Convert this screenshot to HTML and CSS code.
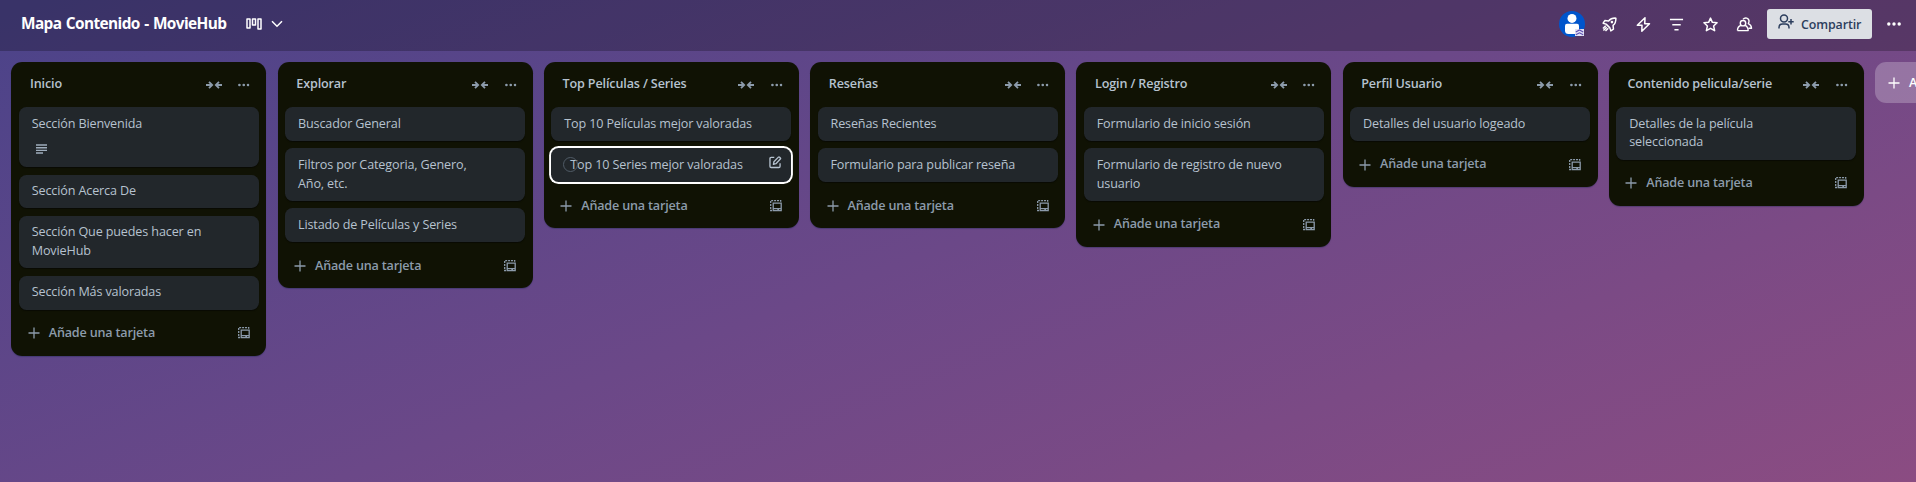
FILE: index.html
```html
<!DOCTYPE html>
<html lang="es">
<head>
<meta charset="utf-8">
<title>Mapa Contenido - MovieHub</title>
<link rel="stylesheet" href="styles.css">
</head>
<body>
<svg class="sprite" aria-hidden="true">
  <symbol id="i-collapse" viewBox="0 0 16 10"><path d="M0 5h5.600M3 1.800 6.200 5 3 8.200M16 5h-5.600M13 1.800 9.800 5 13 8.200" fill="none" stroke="currentColor" stroke-width="1.800"/></symbol>
  <symbol id="i-more" viewBox="0 0 12 4"><circle cx="1.500" cy="2" r="1.400"/><circle cx="6" cy="2" r="1.400"/><circle cx="10.500" cy="2" r="1.400"/></symbol>
  <symbol id="i-plus" viewBox="0 0 12 12"><path d="M6 .5v11M.5 6h11" stroke="currentColor" stroke-width="1.300" fill="none"/></symbol>
  <symbol id="i-template" viewBox="0 0 12 12"><path d="M3.200 3.200h8v7.500h-8zM3.400 8.600h7.800" fill="none" stroke="currentColor" stroke-width="1.300"/><path d="M7.300 8.800h1.700v1.500H7.300z"/><path d="M2 10.500H.7V.7h10v1" fill="none" stroke="currentColor" stroke-width="1.300" stroke-dasharray="2 .9"/></symbol>
</svg>

<header class="bar">
  <h1 class="board-name">Mapa Contenido - MovieHub</h1>
  <svg class="view-icon" viewBox="0 0 16 12"><path d="M1 1h3v9H1zM6.500 1h3v6h-3zM12 1h3v10h-3z" fill="none" stroke="currentColor" stroke-width="1.500" stroke-linejoin="round"/></svg>
  <svg class="chevron" viewBox="0 0 12 8"><path d="m1 1.200 5 5 5-5" fill="none" stroke="currentColor" stroke-width="1.500"/></svg>
  <div class="tools">
    <div class="avatar">
      <svg viewBox="0 0 26 26"><circle cx="13" cy="13" r="13" fill="#0055cc"/><circle cx="13" cy="7.400" r="4.500" fill="#fff"/><path d="M6 14.800q0-2 2-2h10q2 0 2 2v4.700q0 3.500-3.500 3.500h-7Q6 23 6 19.500z" fill="#fff"/></svg>
      <svg class="rank" viewBox="0 0 9 7"><path d="M0 0h9v7H0z" fill="#dfe1f5"/><path d="m.8 3 3.700-2 3.700 2M.8 5.800l3.700-2 3.700 2" fill="none" stroke="#5e4db2" stroke-width="1.100"/></svg>
    </div>
    <svg class="tool" viewBox="0 0 16 16"><path d="M14.800 1.200c-3.800-.2-6 .8-7.800 3L3 3.800 1.200 6.600l3.200 1 4 4 1 3.200 2.800-1.800-.4-4c2.200-1.800 3.200-4 3-7.800zM4 9.300 1 12.300M6.700 12 3.700 15M5 11l-3.500 3.500" fill="none" stroke="currentColor" stroke-width="1.600" stroke-linejoin="round"/><circle cx="10.600" cy="5.400" r="1.400"/></svg>
    <svg class="tool" viewBox="0 0 16 16"><path d="M9.600.8 1.400 8.800h5L6.200 15.200l8.200-8H9.300z" fill="none" stroke="currentColor" stroke-width="1.600" stroke-linejoin="round"/></svg>
    <svg class="tool" viewBox="0 0 16 16"><path d="M1 2.700h14M3.500 8.200h9M5.800 13.600h4.400" fill="none" stroke="currentColor" stroke-width="1.500"/></svg>
    <svg class="tool" viewBox="0 0 16 16"><path d="m8 1.200 2 4.500 5 .5-3.700 3.400 1.100 5L8 12.100l-4.400 2.500 1.100-5L1 6.200l5-.5z" fill="none" stroke="currentColor" stroke-width="1.600" stroke-linejoin="round"/></svg>
    <svg class="tool" viewBox="0 0 16 16"><circle cx="6.400" cy="6.600" r="2.900" fill="none" stroke="currentColor" stroke-width="1.500"/><path d="M.5 14.500q0-4.400 3.700-5.600M.5 14.500h11.400q0-4.400-3.300-5.600M6.500 2.400Q8 .6 10.400 1.200q3.800 1.600 1.700 5.800 3.200 1.400 3.400 5h-3" fill="none" stroke="currentColor" stroke-width="1.500" stroke-linejoin="round"/></svg>
    <button class="share"><svg viewBox="0 0 16 16"><circle cx="6" cy="4.600" r="3.500"/><path d="M1 14.500v-1q0-3.500 3.500-3.500h3q3.500 0 3.500 3.500v1M13 5v5.400M10.300 7.700h5.400"/></svg><span>Compartir</span></button>
    <svg class="bar-more" viewBox="0 0 14 4"><circle cx="1.800" cy="2" r="1.700"/><circle cx="7" cy="2" r="1.700"/><circle cx="12.200" cy="2" r="1.700"/></svg>
  </div>
</header>

<main class="board">
  <section class="list">
    <header class="list-head"><h2>Inicio</h2><svg class="collapse"><use href="#i-collapse"/></svg><svg class="more"><use href="#i-more"/></svg></header>
    <div class="cards">
      <article class="card">Sección Bienvenida<svg class="desc" viewBox="0 0 11 10"><path d="M0 1h11M0 3.700h11M0 6.400h11M0 9h7" stroke="currentColor" stroke-width="1.400"/></svg></article>
      <article class="card">Sección Acerca De</article>
      <article class="card">Sección Que puedes hacer en<br>MovieHub</article>
      <article class="card">Sección Más valoradas</article>
    </div>
    <footer class="add"><svg class="plus"><use href="#i-plus"/></svg><span>Añade una tarjeta</span><svg class="template"><use href="#i-template"/></svg></footer>
  </section>
  <section class="list">
    <header class="list-head"><h2>Explorar</h2><svg class="collapse"><use href="#i-collapse"/></svg><svg class="more"><use href="#i-more"/></svg></header>
    <div class="cards">
      <article class="card">Buscador General</article>
      <article class="card">Filtros por Categoria, Genero,<br>Año, etc.</article>
      <article class="card">Listado de Películas y Series</article>
    </div>
    <footer class="add"><svg class="plus"><use href="#i-plus"/></svg><span>Añade una tarjeta</span><svg class="template"><use href="#i-template"/></svg></footer>
  </section>
  <section class="list">
    <header class="list-head"><h2>Top Películas / Series</h2><svg class="collapse"><use href="#i-collapse"/></svg><svg class="more"><use href="#i-more"/></svg></header>
    <div class="cards">
      <article class="card">Top 10 Películas mejor valoradas</article>
      <article class="card selected"><i class="check"></i>Top 10 Series mejor valoradas<svg class="edit" viewBox="0 0 13 13"><path d="M5.500 1.500H2.200Q1 1.500 1 2.700v8Q1 12 2.200 12h8q1.300 0 1.300-1.300V7.500M4.600 8.600l.5-2.600L9.800 1.200q.6-.5 1.200 0l.8.8q.6.600 0 1.200L7.200 8z" fill="none" stroke="currentColor" stroke-width="1.400" stroke-linejoin="round"/></svg></article>
    </div>
    <footer class="add"><svg class="plus"><use href="#i-plus"/></svg><span>Añade una tarjeta</span><svg class="template"><use href="#i-template"/></svg></footer>
  </section>
  <section class="list">
    <header class="list-head"><h2>Reseñas</h2><svg class="collapse"><use href="#i-collapse"/></svg><svg class="more"><use href="#i-more"/></svg></header>
    <div class="cards">
      <article class="card">Reseñas Recientes</article>
      <article class="card">Formulario para publicar reseña</article>
    </div>
    <footer class="add"><svg class="plus"><use href="#i-plus"/></svg><span>Añade una tarjeta</span><svg class="template"><use href="#i-template"/></svg></footer>
  </section>
  <section class="list">
    <header class="list-head"><h2>Login / Registro</h2><svg class="collapse"><use href="#i-collapse"/></svg><svg class="more"><use href="#i-more"/></svg></header>
    <div class="cards">
      <article class="card">Formulario de inicio sesión</article>
      <article class="card">Formulario de registro de nuevo<br>usuario</article>
    </div>
    <footer class="add"><svg class="plus"><use href="#i-plus"/></svg><span>Añade una tarjeta</span><svg class="template"><use href="#i-template"/></svg></footer>
  </section>
  <section class="list">
    <header class="list-head"><h2>Perfil Usuario</h2><svg class="collapse"><use href="#i-collapse"/></svg><svg class="more"><use href="#i-more"/></svg></header>
    <div class="cards">
      <article class="card">Detalles del usuario logeado</article>
    </div>
    <footer class="add"><svg class="plus"><use href="#i-plus"/></svg><span>Añade una tarjeta</span><svg class="template"><use href="#i-template"/></svg></footer>
  </section>
  <section class="list">
    <header class="list-head"><h2>Contenido pelicula/serie</h2><svg class="collapse"><use href="#i-collapse"/></svg><svg class="more"><use href="#i-more"/></svg></header>
    <div class="cards">
      <article class="card">Detalles de la película<br>seleccionada</article>
    </div>
    <footer class="add"><svg class="plus"><use href="#i-plus"/></svg><span>Añade una tarjeta</span><svg class="template"><use href="#i-template"/></svg></footer>
  </section>
  <button class="add-list"><svg class="plus"><use href="#i-plus"/></svg><span>Añade otra lista</span></button>
</main>
</body>
</html>
```
FILE: styles.css
```css
* { box-sizing: border-box; }
body {
  margin: 0;
  height: 482px;
  overflow: hidden;
  background: linear-gradient(159deg, #4b4389 0%, #6b4888 50%, #8b4c82 100%);
  font-family: "Segoe UI", "Open Sans", "Noto Sans", sans-serif;
  font-size: 12.6px;
  line-height: 18.75px;
  letter-spacing: -0.14px;
  color: #b6c2cf;
}
.sprite { position: absolute; width: 0; height: 0; }
svg { fill: currentColor; flex: none; display: block; overflow: visible; }
h1, h2 { margin: 0; }

.bar {
  display: flex;
  align-items: center;
  height: 51px;
  padding: 0 15px 3px 21px;
  background: rgba(0, 0, 0, 0.24);
  color: #fff;
}
.board-name { width: 205px; font-size: 15.4px; font-weight: 700; letter-spacing: -0.6px; word-spacing: 1px; white-space: nowrap; }
.view-icon { width: 16px; height: 12px; margin-left: 20px; }
.chevron { width: 12px; height: 8px; margin-left: 9px; }
.tools { display: flex; align-items: center; margin-left: auto; }
.avatar { position: relative; width: 26px; height: 26px; margin-right: 17px; }
.rank { position: absolute; right: 1px; bottom: 1px; width: 9px; height: 7px; }
.tool { width: 15px; height: 15px; margin-right: 18.7px; }
.share {
  display: flex;
  align-items: center;
  gap: 7px;
  width: 105px;
  height: 30px;
  margin: 0 15px 0 -3.5px;
  padding: 0 0 0 11px;
  border: 0;
  border-radius: 3px;
  background: #dcdfe4;
  color: #2c3e5d;
  font: 600 12.4px "Segoe UI", "Open Sans", sans-serif;
  letter-spacing: -0.1px;
}
.share svg { width: 16px; height: 16px; margin-top: -4px; fill: none; stroke: currentColor; stroke-width: 1.5; }
.bar-more { width: 14px; height: 4px; }

.board { display: flex; align-items: flex-start; gap: 11.25px; overflow: hidden; height: 431px; padding: 11px 0 0 11.25px; }
.list {
  flex: none;
  width: 255px;
  padding: 0 7.5px 7.5px;
  border-radius: 11.25px;
  background: #101204;
  box-shadow: 0 1px 1px rgba(9, 30, 66, 0.3);
}
.list-head { display: flex; align-items: center; height: 45px; padding: 0 9px 0 11.25px; color: #8c9bab; }
.list-head h2 { flex: 1; font-size: 12.6px; font-weight: 600; color: #b6c2cf; white-space: nowrap; }
.collapse { width: 16px; height: 10px; margin-right: 16.5px; }
.more { width: 11.5px; height: 4px; }
.cards { display: flex; flex-direction: column; gap: 7.5px; }
.card {
  position: relative;
  min-height: 33.75px;
  padding: 7.5px 11px 7.5px 13px;
  border-radius: 7.5px;
  background: #22272b;
  box-shadow: 0 1px 1px rgba(3, 4, 4, 0.5);
}
.desc { width: 11px; height: 10px; margin: 10.5px 0 5.75px 4px; color: #9fadbc; }
.selected { padding-left: 19px; box-shadow: 0 0 0 1.9px #fff; }
.check { position: absolute; left: 12px; top: 9px; width: 15px; height: 15px; border: 1px solid #505b66; border-radius: 50%; }
.edit { position: absolute; right: 9.5px; top: 8px; width: 12.5px; height: 12.5px; }
.add { display: flex; align-items: center; height: 30px; margin-top: 8.9px; padding: 0 9px; color: #8c9bab; font-weight: 600; letter-spacing: -0.18px; }
.plus { width: 12px; height: 12px; }
.add span { flex: 1; margin-left: 9px; }
.template { width: 12px; height: 12px; }
.add-list {
  display: flex;
  align-items: center;
  gap: 9px;
  flex: none;
  width: 255px;
  height: 41px;
  padding: 0 13px;
  border: 0;
  border-radius: 11.25px;
  background: rgba(255, 255, 255, 0.24);
  color: #fff;
  font: 600 12.6px "Segoe UI", "Open Sans", sans-serif;
}
```
